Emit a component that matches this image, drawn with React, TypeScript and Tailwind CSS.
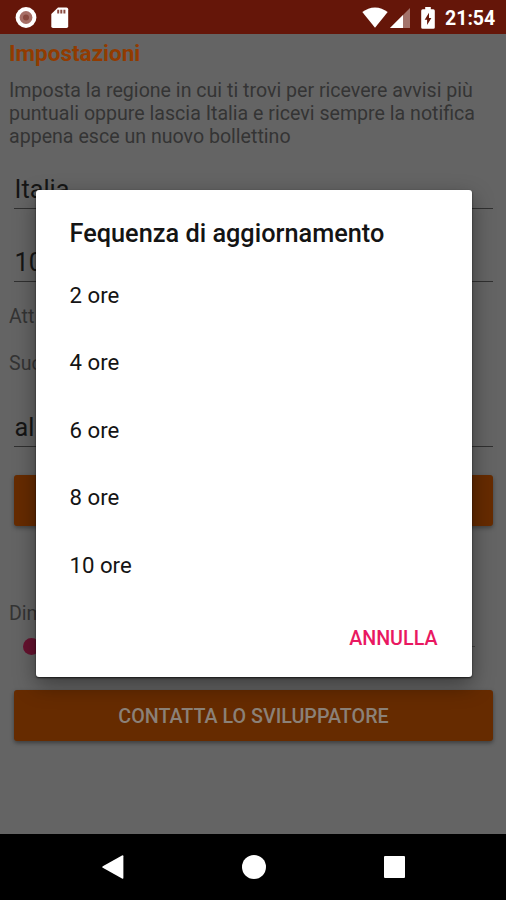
import React from "react";

const options = ["2 ore", "4 ore", "6 ore", "8 ore", "10 ore"];

function StatusBar() {
  return (
    <header className="flex h-[34px] shrink-0 items-center bg-[#651609] pl-[15px] pr-[10px] pt-px text-white">
      <svg width="22" height="22" viewBox="0 0 22 22">
        <circle cx="11" cy="10.5" r="10.4" fill="#fff" />
        <circle cx="11" cy="10.5" r="6.4" fill="#a66e66" />
        <circle cx="11" cy="10.5" r="3" fill="#88483e" />
      </svg>
      <svg className="ml-[14px]" width="18" height="22" viewBox="0 0 18 22">
        <path fill="#fff" d="M7 .5h8.5q1.7 0 1.7 1.7v17q0 1.7-1.7 1.7H2q-1.7 0-1.7-1.7V7z" />
        <path fill="#8a4b42" d="M6.2 2.7h2v3.7h-2zM9.3 2.7h2v3.7h-2zM12.4 2.7h2v3.7h-2z" />
      </svg>
      <div className="ml-auto flex items-center">
        <svg width="26" height="22" viewBox="0 0 26 22">
          <path fill="#fff" d="M.3 5.1Q6 .4 13 .4t12.7 4.7L13 20.7z" />
        </svg>
        <svg className="ml-[2px]" width="20" height="22" viewBox="0 0 20 22">
          <path fill="#a3736b" d="M20 1v20H0z" />
          <path fill="#fff" d="M13 8v13H0z" />
        </svg>
        <svg className="ml-[11px]" width="14" height="22" viewBox="0 0 14 22">
          <path fill="#fff" d="M4.2 0h5.6v2.2h2.5q1.5 0 1.5 1.5v16.7q0 1.4-1.5 1.4H1.7Q.2 21.8.2 20.4V3.7q0-1.5 1.5-1.5h2.5z" />
          <path fill="#651609" d="M8 5.8v5.1h2.4L6.1 18v-5.3H3.7z" />
        </svg>
        <span className="ml-[10px] mt-[2px] w-[51px] whitespace-nowrap text-[19.5px] font-bold leading-[22px]">21:54</span>
      </div>
    </header>
  );
}

function Field({ value, className }: { value: string; className: string }) {
  return (
    <div className={`ml-[14px] mr-[13px] flex items-end border-b border-[#303030] pl-[0.5px] text-[25.3px] leading-[28px] text-[#151515] ${className}`}>
      {value}
    </div>
  );
}

function SettingsPage() {
  return (
    <main className="flex flex-1 flex-col bg-[#646464] text-[19.6px] leading-[23px] text-[#343434]">
      <h1 className="ml-[9px] mt-[6px] text-[22.5px] font-bold leading-[26px] text-[#923b00]">Impostazioni</h1>
      <p className="ml-[9px] mt-[13px] whitespace-nowrap">
        Imposta la regione in cui ti trovi per ricevere avvisi più
        <br />
        puntuali oppure lascia Italia e ricevi sempre la notifica
        <br />
        appena esce un nuovo bollettino
      </p>
      <Field value="Italia" className="mt-[20px] h-[41px] pb-[4px]" />
      <Field value="10" className="h-[73px] pb-[4px]" />
      <p className="ml-[9px] mt-[23px]">Att</p>
      <p className="ml-[9px] mt-[24px]">Suc</p>
      <Field value="al" className="h-[72px] pb-[4px]" />
      <div className="ml-[14px] mr-[13px] mt-[28px] h-[51px] rounded-[3px] bg-[#662b00] shadow-[0_2px_4px_rgba(0,0,0,0.35)]" />
      <p className="ml-[9px] mt-[76px]">Dim</p>
      <div className="ml-[23px] mr-[31px] mt-[12px] flex h-[18px] items-center">
        <span className="size-[17px] rounded-full bg-[#66122f]" />
        <span className="h-px flex-1 bg-[#444444]" />
      </div>
      <button className="ml-[14px] mr-[13px] mt-[35px] h-[51px] rounded-[3px] bg-[#662b00] pt-[2px] text-[19.7px] font-medium text-[#8b8178] shadow-[0_2px_4px_rgba(0,0,0,0.4)]">
        CONTATTA LO SVILUPPATORE
      </button>
    </main>
  );
}

function FrequencyDialog() {
  return (
    <section
      role="dialog"
      className="absolute left-[35.5px] top-[190px] flex h-[487px] w-[436px] flex-col rounded-[3px] bg-white px-[34px] text-[#141414] shadow-[0_1px_2px_rgba(0,0,0,0.7),0_8px_22px_rgba(0,0,0,0.4)]"
    >
      <h2 className="mt-[29px] whitespace-nowrap text-[25.3px] font-medium leading-[30px]">Fequenza di aggiornamento</h2>
      <ul className="mt-[12.5px] text-[22.2px]">
        {options.map((option) => (
          <li key={option} className="flex h-[67.5px] items-center">
            {option}
          </li>
        ))}
      </ul>
      <button className="mt-[26.5px] self-end text-[19.7px] font-medium leading-[26px] text-[#e91861]">ANNULLA</button>
    </section>
  );
}

function NavigationBar() {
  return (
    <nav className="flex h-[66px] shrink-0 items-center bg-black pl-[102px] pr-[101px]">
      <svg width="22" height="24" viewBox="0 0 22 24">
        <path fill="#fff" d="M.8 11.2 20 .4q1.4-.7 1.4.8v21.6q0 1.5-1.4.8L.8 12.8q-1.2-.8 0-1.6z" />
      </svg>
      <span className="ml-[118px] size-[24px] rounded-full bg-white" />
      <span className="ml-auto size-[21.5px] rounded-[1px] bg-white" />
    </nav>
  );
}

export default function App() {
  return (
    <div className="relative flex h-[900px] w-[506px] flex-col overflow-hidden font-[Roboto,sans-serif]">
      <StatusBar />
      <SettingsPage />
      <NavigationBar />
      <FrequencyDialog />
    </div>
  );
}
